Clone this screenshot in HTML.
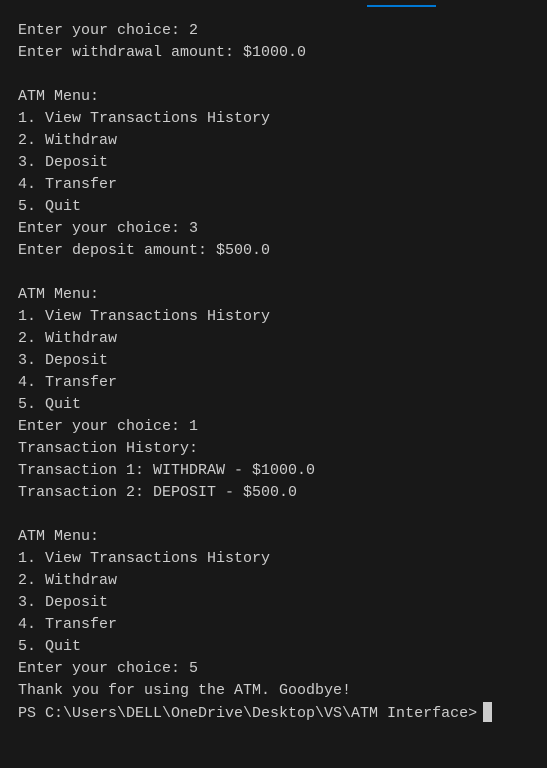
<!DOCTYPE html>
<html><head><style>
html,body{margin:0;padding:0;background:#181818;width:547px;height:768px;overflow:hidden}
pre{position:absolute;left:18px;top:20px;margin:0;font-family:"Liberation Mono",monospace;font-size:15px;line-height:22px;color:#cccccc}
.bar{position:absolute;left:367px;top:5px;width:69px;height:2px;background:#0078d4}
.cur{display:inline-block;width:9px;height:20px;background:#cccccc;vertical-align:-5px;margin-left:6px}
</style></head><body>
<div class="bar"></div>
<pre>Enter your choice: 2
Enter withdrawal amount: $1000.0

ATM Menu:
1. View Transactions History
2. Withdraw
3. Deposit
4. Transfer
5. Quit
Enter your choice: 3
Enter deposit amount: $500.0

ATM Menu:
1. View Transactions History
2. Withdraw
3. Deposit
4. Transfer
5. Quit
Enter your choice: 1
Transaction History:
Transaction 1: WITHDRAW - $1000.0
Transaction 2: DEPOSIT - $500.0

ATM Menu:
1. View Transactions History
2. Withdraw
3. Deposit
4. Transfer
5. Quit
Enter your choice: 5
Thank you for using the ATM. Goodbye!
PS C:\Users\DELL\OneDrive\Desktop\VS\ATM Interface&gt;<span class="cur"></span></pre>
</body></html>
